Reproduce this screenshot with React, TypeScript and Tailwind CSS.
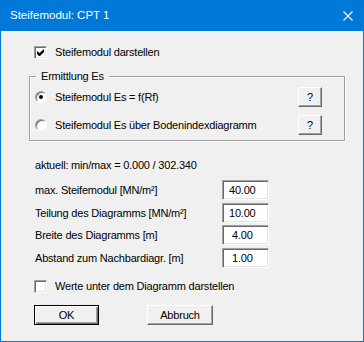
import React from 'react';

// sunken 3D edge used by check boxes, radio buttons and edit fields
const sunken = 'border border-t-[#a0a0a0] border-l-[#a0a0a0] border-b-white border-r-white shadow-[inset_1px_1px_0_#696969,inset_-1px_-1px_0_#e3e3e3]';
const raised = 'border border-t-white border-l-white border-b-[#696969] border-r-[#696969] shadow-[inset_-1px_-1px_0_#a0a0a0]';

function CheckBox({ checked, label }: { checked?: boolean; label: string }) {
  return (
    <div className="flex items-center h-[13px] ml-[33px]">
      <div className={`w-[13px] h-[13px] bg-white flex items-center justify-center ${sunken}`}>
        {checked && (
          <svg width="7" height="7" viewBox="0 0 7 7">
            <path d="M0 2v3l2 2h1l4-4V0L2.5 4z" fill="#000" />
          </svg>
        )}
      </div>
      <span className="ml-[8px]">{label}</span>
    </div>
  );
}

function Radio({ checked, label }: { checked?: boolean; label: string }) {
  return (
    <div className="flex items-center h-[20px]">
      <div className="w-[12px] h-[12px] rounded-full bg-white border border-t-[#a0a0a0] border-l-[#a0a0a0] border-b-white border-r-white shadow-[inset_1px_1px_0_#696969] flex items-center justify-center">
        {checked && <div className="w-[4px] h-[4px] rounded-full bg-black" />}
      </div>
      <span className="ml-[8px]">{label}</span>
      <button className={`ml-auto w-[24px] h-[20px] bg-[#f0f0f0] flex items-center justify-center ${raised}`}>?</button>
    </div>
  );
}

function Field({ label, value, pad }: { label: string; value: string; pad: string }) {
  return (
    <div className="flex items-center h-[20px] ml-[34px]">
      <span className="w-[187px]">{label}</span>
      <div className={`w-[47px] h-[20px] bg-white flex items-center ${pad} ${sunken}`}>{value}</div>
    </div>
  );
}

export default function App() {
  return (
    <div className="w-[364px] h-[342px] bg-[#0078d7] px-[1px] pb-[1px] flex flex-col text-black text-[11px] tracking-[-0.2px] font-['Liberation_Sans',Arial,sans-serif] leading-none">
      {/* title bar */}
      <div className="h-[31px] flex items-center pl-[9px] pr-[9px] text-white text-[11.5px] tracking-normal">
        <span>Steifemodul: CPT 1</span>
        <svg className="ml-auto mr-[1px]" width="10" height="10" viewBox="0 0 10 10">
          <path d="M0.5 0.5l9 9M9.5 0.5l-9 9" stroke="#fff" strokeWidth="1.1" />
        </svg>
      </div>

      <div className="flex-1 bg-[#f0f0f0] flex flex-col pt-[15px]">
        <CheckBox checked label="Steifemodul darstellen" />

        {/* group box */}
        <div className="relative ml-[28px] mt-[17px] w-[316px] h-[65px] border border-[#a0a0a0] shadow-[1px_1px_0_#fff,inset_1px_1px_0_#fff] pt-[10px] pl-[5px] pr-[22px] flex flex-col gap-[8px]">
          <span className="absolute -top-[7px] left-[6px] px-[5px] bg-[#f0f0f0] h-[13px] flex items-center">Ermittlung Es</span>
          <Radio checked label="Steifemodul Es = f(Rf)" />
          <Radio label="Steifemodul Es über Bodenindexdiagramm" />
        </div>

        <div className="ml-[34px] mt-[18px] h-[13px] flex items-center">aktuell: min/max = 0.000 / 302.340</div>

        <div className="mt-[8px]">
          <Field label="max. Steifemodul [MN/m²]" value="40.00" pad="pl-[6px]" />
        </div>
        <div className="mt-[3px]">
          <Field label="Teilung des Diagramms [MN/m²]" value="10.00" pad="pl-[6px]" />
        </div>
        <div className="mt-[2px]">
          <Field label="Breite des Diagramms [m]" value="4.00" pad="pl-[9px]" />
        </div>
        <div className="mt-[3px]">
          <Field label="Abstand zum Nachbardiagr. [m]" value="1.00" pad="pl-[9px]" />
        </div>

        <div className="mt-[12px]">
          <CheckBox label="Werte unter dem Diagramm darstellen" />
        </div>

        <div className="flex mt-[12px] ml-[33px]">
          <button className="w-[65px] h-[20px] bg-[#f0f0f0] border border-black shadow-[inset_1px_1px_0_#fff,inset_-1px_-1px_0_#696969,inset_-2px_-2px_0_#a0a0a0] flex items-center justify-center">OK</button>
          <button className={`ml-[48px] w-[66px] h-[20px] bg-[#f0f0f0] flex items-center justify-center ${raised}`}>Abbruch</button>
        </div>
      </div>
    </div>
  );
}
